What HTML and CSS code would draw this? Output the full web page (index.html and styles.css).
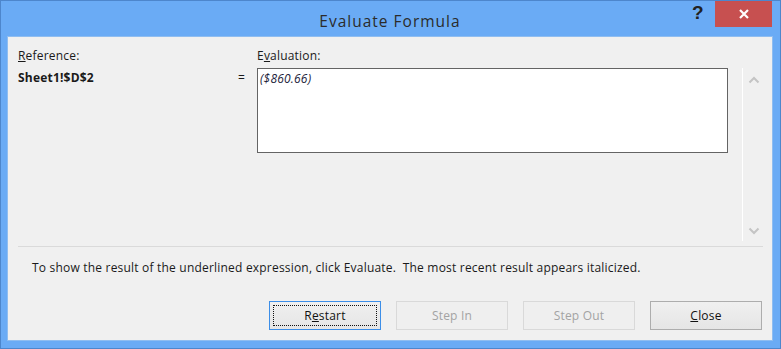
FILE: index.html
```html
<!DOCTYPE html>
<html>
<head>
<meta charset="utf-8">
<link rel="stylesheet" href="styles.css">
</head>
<body>
<div class="window">
  <div class="titlebar">
    <div class="title">Evaluate Formula</div>
    <div class="help">?</div>
    <div class="close">
      <svg width="12" height="12" viewBox="0 0 12 12"><path d="M2 2 L10 10 M10 2 L2 10" stroke="#fff" stroke-width="2.2" fill="none"/></svg>
    </div>
  </div>
  <div class="client">
    <div class="top">
      <div class="refcol">
        <div class="label"><u>R</u>eference:</div>
        <div class="ref">Sheet1!$D$2</div>
      </div>
      <div class="eq">=</div>
      <div class="evalcol">
        <div class="label">E<u>v</u>aluation:</div>
        <div class="box"><i>($860.66)</i></div>
      </div>
      <div class="scroll">
        <svg width="12" height="8" viewBox="0 0 12 8"><path d="M1.5 6.5 L6 2 L10.5 6.5" stroke="#c4c4c4" stroke-width="2" fill="none"/></svg>
        <svg width="12" height="8" viewBox="0 0 12 8"><path d="M1.5 1.5 L6 6 L10.5 1.5" stroke="#c4c4c4" stroke-width="2" fill="none"/></svg>
      </div>
    </div>
    <div class="sep"></div>
    <div class="msg">To show the result of the underlined expression, click Evaluate.&nbsp; The most recent result appears italicized.</div>
    <div class="buttons">
      <div class="btn focus"><span class="inner">R<u>e</u>start</span></div>
      <div class="btn disabled"><span class="inner">Step In</span></div>
      <div class="btn disabled"><span class="inner">Step Out</span></div>
      <div class="btn"><span class="inner"><u>C</u>lose</span></div>
    </div>
  </div>
</div>
</body>
</html>
```

FILE: styles.css
```css
html, body {
  margin: 0;
  padding: 0;
}
body {
  font-family: "Open Sans", "Noto Sans", sans-serif;
  font-size: 12px;
  letter-spacing: 0.2px;
  color: #1a1a1a;
}
.window {
  width: 781px;
  height: 349px;
  box-sizing: border-box;
  background: #6aabf5;
  border: 1px solid #4d86cc;
  padding: 0 8px 8px 7px;
  display: flex;
  flex-direction: column;
}
.titlebar {
  height: 36px;
  position: relative;
}
.title {
  position: absolute;
  left: 0;
  right: 0;
  top: 9px;
  text-align: center;
  font-size: 15.5px;
  letter-spacing: 1px;
  color: #2b2b2b;
}
.help {
  position: absolute;
  left: 684px;
  top: 1px;
  font-family: "Liberation Sans", sans-serif;
  font-weight: bold;
  font-size: 19px;
  color: #222;
}
.close {
  position: absolute;
  left: 707px;
  top: 0;
  width: 57px;
  height: 26px;
  background: #c75050;
  display: flex;
  align-items: center;
  justify-content: center;
}
.close svg { display: block; }
.client {
  flex: 1;
  background: #f0f0f0;
  box-shadow: 0 0 0 1px #8fbdf0;
  display: flex;
  flex-direction: column;
}
.top {
  display: flex;
  padding: 10px 0 0 10px;
  height: 194px;
}
.label {
  height: 18px;
  line-height: 18px;
}
.refcol {
  width: 220px;
}
.ref {
  font-weight: bold;
  height: 20px;
  line-height: 20px;
  margin-top: 3px;
}
.eq {
  width: 19px;
  padding-top: 21px;
  line-height: 20px;
}
.evalcol {
  width: 471px;
  display: flex;
  flex-direction: column;
}
.box {
  margin-top: 3px;
  height: 85px;
  box-sizing: border-box;
  border: 1px solid #646464;
  background: #fff;
  padding: 1px 2px;
  line-height: 18px;
  color: #1c1c3a;
}
.scroll {
  margin-top: 21px;
  margin-left: 14px;
  width: 20px;
  height: 173px;
  box-sizing: border-box;
  border-left: 1px solid #ffffff;
  display: flex;
  flex-direction: column;
  justify-content: space-between;
  align-items: center;
  padding: 8px 0 6px 3px;
}
.scroll svg { display: block; }
.sep {
  margin: 5px 9px 0 10px;
  height: 1px;
  background: #dadada;
}
.msg {
  padding-left: 24px;
  margin-top: 12px;
  height: 18px;
  line-height: 18px;
  color: #1a1a1a;
}
.buttons {
  display: flex;
  justify-content: flex-end;
  gap: 15px;
  padding-right: 10px;
  margin-top: 24px;
}
.btn {
  width: 112px;
  height: 29px;
  box-sizing: border-box;
  border: 1px solid #adadad;
  background: linear-gradient(#f0f0f0, #e5e5e5);
  display: flex;
  align-items: stretch;
  padding: 3px;
}
.btn .inner {
  flex: 1;
  display: flex;
  align-items: center;
  justify-content: center;
  border: 1px dotted transparent;
  color: #111;
}
.btn.focus {
  border-color: #3c8ee8;
}
.btn.focus .inner {
  border: 1px dotted #111;
}
.btn.disabled {
  border-color: #d9d9d9;
  background: #efefef;
}
.btn.disabled .inner {
  color: #a3a3a3;
}
```
